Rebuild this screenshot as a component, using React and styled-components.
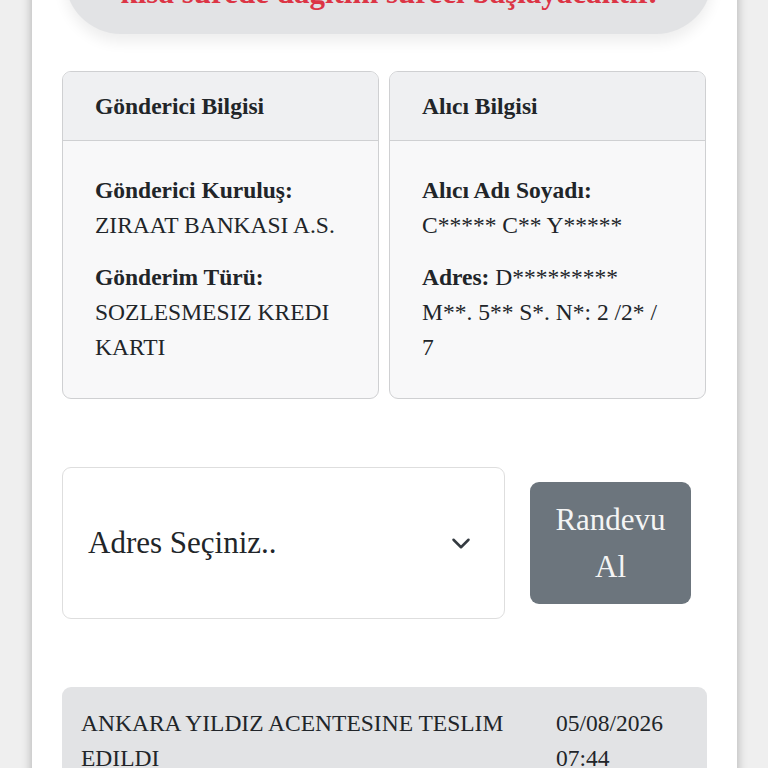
import React from 'react'
import styled, { createGlobalStyle } from 'styled-components'

const Global = createGlobalStyle`
  html, body {
    margin: 0;
    padding: 0;
    background: #efefef;
    font-family: "Liberation Serif", "Times New Roman", serif;
    color: #212529;
  }
  * { box-sizing: border-box; }
`

const Viewport = styled.div`
  height: 768px;
  overflow: hidden;
`

const Page = styled.div`
  margin-left: 32px;
  width: 705px;
  min-height: 900px;
  background: #fff;
  box-shadow: 0 0 10px rgba(0, 0, 0, 0.28);
`

const Notice = styled.div`
  margin: -78px 25px 0 33px;
  padding: 20px 30px 24px;
  background: #e2e3e5;
  border-radius: 0 0 56px 56px;
  box-shadow: 0 8px 14px rgba(0, 0, 0, 0.07);
  text-align: center;
  color: #dc3545;
  font-weight: bold;
  font-size: 31px;
  line-height: 34px;
  white-space: nowrap;
`

const Content = styled.div`
  padding: 37px 31px 0 30px;
`

const CardGrid = styled.div`
  display: grid;
  grid-template-columns: 1fr 1fr;
  gap: 10px;
`

const Card = styled.div`
  border: 1px solid #cfd0d2;
  border-radius: 9px;
  background: #f8f8f9;
  overflow: hidden;
`

const CardHeader = styled.div`
  padding: 17px 32px;
  line-height: 34px;
  font-size: 23.5px;
  font-weight: bold;
  background: #eff0f2;
  border-bottom: 1px solid #cfd0d2;
`

const CardBody = styled.div`
  padding: 32px 32px 33px;
  display: flex;
  flex-direction: column;
  gap: 17px;
`

const Field = styled.div`
  font-size: 23.5px;
  line-height: 35px;
`

const Label = styled.div`
  font-weight: bold;
  display: ${p => (p.$inline ? 'inline' : 'block')};
`

const Line = styled.span`
  display: block;
  white-space: nowrap;
`

const ActionRow = styled.div`
  margin-top: 68px;
  display: flex;
  align-items: center;
  gap: 25px;
`

const Select = styled.div`
  width: 443px;
  height: 152px;
  border: 1px solid #dedede;
  border-radius: 9px;
  background: #fff;
  display: flex;
  align-items: center;
  justify-content: space-between;
  padding: 0 33px 0 25px;
  font-size: 31px;
`

const Button = styled.button`
  width: 161px;
  height: 122px;
  border: none;
  border-radius: 9px;
  background: #6c757d;
  color: #f4f4f4;
  font-family: inherit;
  font-size: 31px;
  line-height: 47px;
  padding: 0 20px;
`

const Alert = styled.div`
  margin-top: 68px;
  margin-right: -1px;
  background: #e2e3e5;
  border-radius: 9px;
  padding: 19px 19px;
  display: grid;
  grid-template-columns: 1fr 132px;
  gap: 20px;
  font-size: 23.5px;
  line-height: 35px;
`

function Chevron() {
  return (
    <svg width="20" height="15" viewBox="0 0 16 12" fill="none">
      <path d="m2 3 6 6 6-6" stroke="#343a40" strokeWidth="2" strokeLinecap="round" strokeLinejoin="round" />
    </svg>
  )
}

export default function App() {
  return (
    <Viewport>
      <Global />
      <Page>
        <Notice>
          Gönderiniz merkezimize ulaşmıştır,
          <br />
          kısa sürede dağıtım süreci başlayacaktır.
        </Notice>
        <Content>
          <CardGrid>
            <Card>
              <CardHeader>Gönderici Bilgisi</CardHeader>
              <CardBody>
                <Field>
                  <Label>Gönderici Kuruluş:</Label>
                  ZIRAAT BANKASI A.S.
                </Field>
                <Field>
                  <Label>Gönderim Türü:</Label>
                  SOZLESMESIZ KREDI KARTI
                </Field>
              </CardBody>
            </Card>
            <Card>
              <CardHeader>Alıcı Bilgisi</CardHeader>
              <CardBody>
                <Field>
                  <Label>Alıcı Adı Soyadı:</Label>
                  C***** C** Y*****
                </Field>
                <Field>
                  <Line>
                    <Label $inline>Adres:</Label> D*********
                  </Line>
                  <Line>M**. 5** S*. N*: 2 /2* /</Line>
                  <Line>7</Line>
                </Field>
              </CardBody>
            </Card>
          </CardGrid>

          <ActionRow>
            <Select>
              <span>Adres Seçiniz..</span>
              <Chevron />
            </Select>
            <Button>Randevu Al</Button>
          </ActionRow>

          <Alert>
            <div>ANKARA YILDIZ ACENTESINE TESLIM EDILDI</div>
            <div>05/08/2026 07:44</div>
          </Alert>
        </Content>
      </Page>
    </Viewport>
  )
}
